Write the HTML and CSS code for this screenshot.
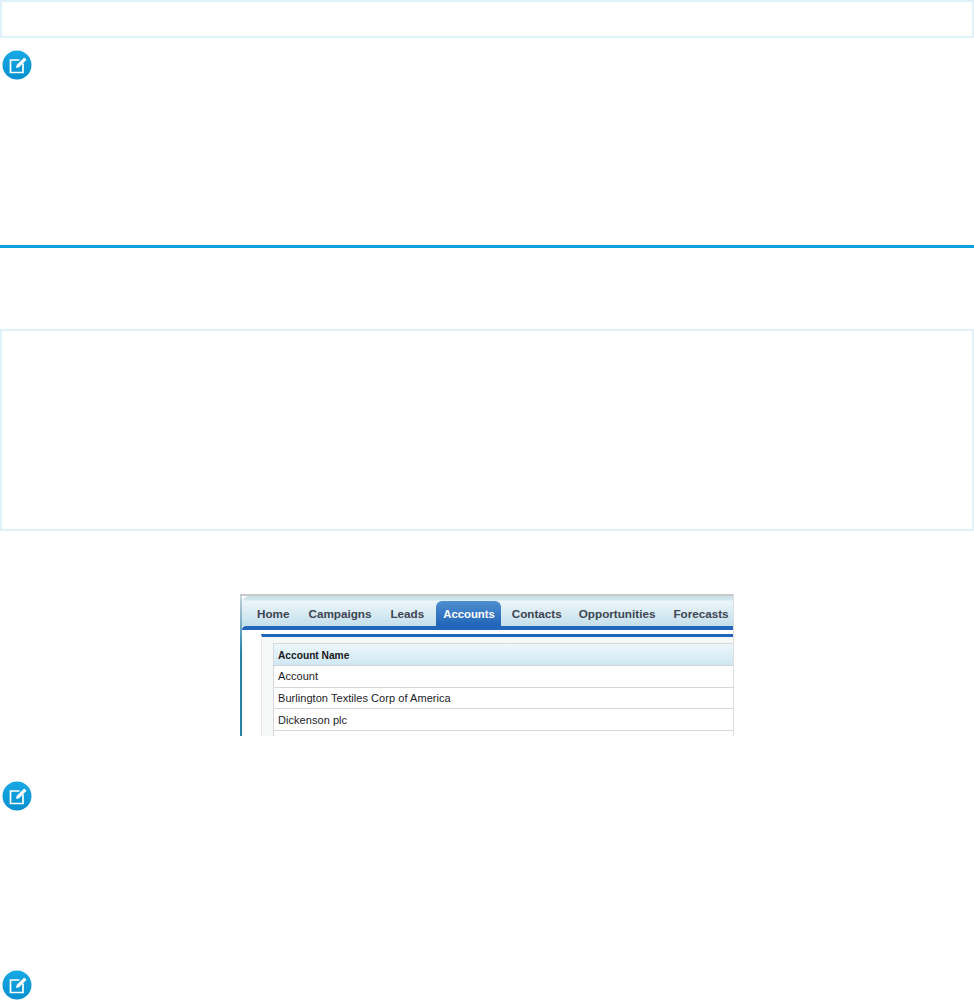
FILE: index.html
```html
<!DOCTYPE html>
<html lang="en">
<head>
<meta charset="utf-8">
<title>Accounts</title>
<link rel="stylesheet" href="styles.css">
</head>
<body>
<div class="code-box code-top"></div>
<div class="note note-first"><svg class="note-icon" viewBox="0 0 30 30"><defs><linearGradient id="g" x1="0" y1="0" x2="0" y2="1"><stop offset="0" stop-color="#18a9e4"/><stop offset="1" stop-color="#0790cf"/></linearGradient></defs><circle cx="15" cy="15" r="14.5" fill="url(#g)"/><path d="M17.5 10H8.5v12.5H21V13.5" fill="none" stroke="#fff" stroke-width="1.7"/><path d="M14 18l.7-3 7.5-7.5 2.3 2.3-7.5 7.5z" fill="#fff"/></svg></div>
<hr class="rule">
<div class="code-box code-mid"></div>
<div class="shot">
  <div class="tabs">
    <span class="tab">Home</span>
    <span class="tab">Campaigns</span>
    <span class="tab">Leads</span>
    <span class="tab tab-active">Accounts</span>
    <span class="tab">Contacts</span>
    <span class="tab">Opportunities</span>
    <span class="tab">Forecasts</span>
  </div>
  <div class="tab-stripe"></div>
  <div class="content">
    <div class="inner">
      <div class="table">
        <div class="thead">Account Name</div>
        <div class="row row-first">Account</div>
        <div class="row row-b">Burlington Textiles Corp of America</div>
        <div class="row">Dickenson plc</div>
        <div class="row row-last"></div>
      </div>
    </div>
  </div>
</div>
<div class="note note-second"><svg class="note-icon" viewBox="0 0 30 30"><circle cx="15" cy="15" r="14.5" fill="url(#g)"/><path d="M17.5 10H8.5v12.5H21V13.5" fill="none" stroke="#fff" stroke-width="1.7"/><path d="M14 18l.7-3 7.5-7.5 2.3 2.3-7.5 7.5z" fill="#fff"/></svg></div>
<div class="note note-third"><svg class="note-icon" viewBox="0 0 30 30"><circle cx="15" cy="15" r="14.5" fill="url(#g)"/><path d="M17.5 10H8.5v12.5H21V13.5" fill="none" stroke="#fff" stroke-width="1.7"/><path d="M14 18l.7-3 7.5-7.5 2.3 2.3-7.5 7.5z" fill="#fff"/></svg></div>
</body>
</html>
```
FILE: styles.css
```css
html, body {
  margin: 0;
  padding: 0;
  background: #fff;
  font-family: "Liberation Sans", Arial, sans-serif;
}
body {
  height: 1003px;
  overflow: hidden;
}
.code-box {
  box-sizing: border-box;
  border: 2px solid #dff2fb;
  background: #fff;
}
.code-top {
  height: 38px;
}
.code-mid {
  height: 202px;
  margin-top: 81px;
}
.note {
  height: 30px;
  padding-left: 2px;
}
.note-first {
  margin-top: 12px;
}
.note-second {
  margin-top: 45px;
}
.note-third {
  margin-top: 159px;
}
.note-icon {
  display: block;
  width: 30px;
  height: 30px;
}
.rule {
  height: 3px;
  margin: 165px 0 0;
  border: 0;
  background: #0ba2de;
}
.shot {
  box-sizing: border-box;
  width: 494px;
  height: 142px;
  margin: 63px auto 0;
  padding-left: 2px;
  border-top: 2px solid #c6cacb;
  border-right: 1px solid #dcdedf;
  overflow: hidden;
  background: linear-gradient(#c3d3d9, #2a84aa 40%) left top / 2px 100% no-repeat, #fff;
}
.tabs {
  display: flex;
  height: 30px;
  align-items: stretch;
  padding-left: 6px;
  background: linear-gradient(#c8dde5 0, #d6e7ee 4px, #ecf6fa 5px, #c4dfeb 100%);
  border-radius: 7px 0 0 0;
}
.tab {
  display: flex;
  align-items: center;
  padding: 5px 9px 0;
  font-size: 11.7px;
  font-weight: 700;
  color: #3d4552;
  white-space: nowrap;
}
.tab:nth-child(-n+3) {
  padding-right: 10px;
}
.tab-active {
  color: #fff;
  font-size: 11.3px;
  background: linear-gradient(#4f8fd0, #2064b8);
  border-radius: 6px 6px 0 0;
  margin: 5px 2px 0 2px;
  padding: 0 6px 0 7px;
}
.tab-active + .tab {
  padding-right: 8px;
}
.tab-stripe {
  height: 4px;
  background: #2166bb;
  border-radius: 5px 0 0 0;
}
.content {
  padding: 4px 0 0 19px;
  background: #fff;
}
.inner {
  border-top: 3px solid #2166bb;
  border-left: 1px solid #e4e6e7;
  background: #f7f8f8;
  padding: 6px 0 0 11px;
}
.table {
  border-left: 1px solid #d6d8d9;
  border-top: 1px solid #d6d8d9;
  background: #fff;
}
.thead {
  display: flex;
  align-items: center;
  height: 20px;
  padding: 1px 0 0 4px;
  font-size: 10.2px;
  font-weight: 700;
  color: #16181c;
  background: linear-gradient(#edf7fb, #cfe8f3);
  border-bottom: 1px solid #d0d3d5;
}
.row {
  display: flex;
  align-items: center;
  height: 21px;
  padding-left: 4px;
  font-size: 11px;
  letter-spacing: 0.05px;
  color: #1c1c28;
  border-bottom: 1px solid #d8d9da;
}
.row-first {
  height: 19px;
  padding-bottom: 2px;
}
.row-b {
  height: 20px;
}
.row-last {
  height: 5px;
}
```
